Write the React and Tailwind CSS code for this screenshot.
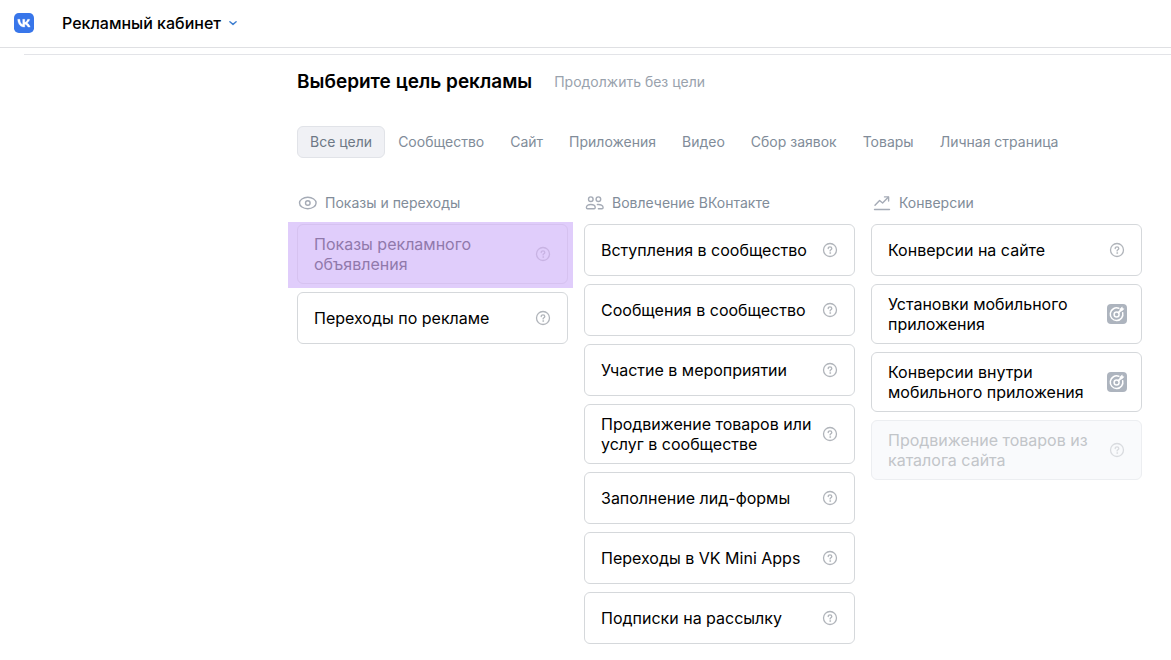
import clsx from 'clsx'

const tabs = ['Все цели', 'Сообщество', 'Сайт', 'Приложения', 'Видео', 'Сбор заявок', 'Товары', 'Личная страница']

const columns = [
  {
    title: 'Показы и переходы',
    icon: EyeIcon,
    goals: [
      { title: 'Показы рекламного объявления', disabled: true, highlighted: true },
      { title: 'Переходы по рекламе' },
    ],
  },
  {
    title: 'Вовлечение ВКонтакте',
    icon: UsersIcon,
    goals: [
      { title: 'Вступления в сообщество' },
      { title: 'Сообщения в сообщество' },
      { title: 'Участие в мероприятии' },
      { title: 'Продвижение товаров или услуг в сообществе' },
      { title: 'Заполнение лид-формы' },
      { title: 'Переходы в VK Mini Apps' },
      { title: 'Подписки на рассылку' },
    ],
  },
  {
    title: 'Конверсии',
    icon: ChartIcon,
    goals: [
      { title: 'Конверсии на сайте' },
      { title: 'Установки мобильного приложения', tracker: true },
      { title: 'Конверсии внутри мобильного приложения', tracker: true },
      { title: 'Продвижение товаров из каталога сайта', disabled: true },
    ],
  },
]

function VkLogo() {
  return (
    <svg viewBox="0 0 20 20" className="w-5 h-5" aria-hidden="true">
      <rect width="20" height="20" rx="4.8" fill="#3876ea" />
      <path
        fill="#fff"
        stroke="#fff"
        strokeWidth=".3"
        d="M10.6 14.100C6.500 14.100 3.900 11.200 3.700 6.300h2.200c.1 3.500 1.600 4.900 2.800 5.200V6.300h2.100v3c1.200-.1 2.400-1.500 2.800-3h2.100c-.3 1.800-1.600 3.200-2.600 3.800 1 .5 2.500 1.700 3.100 4h-2.300c-.5-1.500-1.600-2.600-3.100-2.800v2.800z"
      />
    </svg>
  )
}

function EyeIcon() {
  return (
    <svg viewBox="0 0 20 20" fill="none" stroke="#a5abb6" strokeWidth="1.4" className="w-5 h-5" aria-hidden="true">
      <ellipse cx="10.8" cy="10" rx="8.3" ry="5.7" />
      <circle cx="10.8" cy="10" r="2.300" />
    </svg>
  )
}

function UsersIcon() {
  return (
    <svg viewBox="0 0 20 20" fill="none" stroke="#a5abb6" strokeWidth="1.400" strokeLinecap="round" className="w-5 h-5" aria-hidden="true">
      <g transform="translate(.8 0)">
        <circle cx="6" cy="6.200" r="2.300" />
        <circle cx="13.600" cy="6.200" r="2.300" />
        <path d="M6 11.500c-2.600 0-4.400 1.300-4.400 3 0 .8.400 1.200 1.100 1.200h6.600c.7 0 1.100-.4 1.100-1.200 0-1.700-1.800-3-4.400-3z" />
        <path d="M12.600 11.500c3.200-.4 5.700 1 5.700 3 0 .8-.4 1.200-1.100 1.200h-3.600" />
      </g>
    </svg>
  )
}

function ChartIcon() {
  return (
    <svg viewBox="0 0 20 20" fill="none" stroke="#a5abb6" strokeWidth="1.400" strokeLinecap="round" strokeLinejoin="round" className="w-5 h-5" aria-hidden="true">
      <path d="M3.500 16.500h15" />
      <path d="M4 12.300l4.600-4.800 3 2.500 5.600-5.700" />
      <path d="M13.500 3.900h4.100V8" />
    </svg>
  )
}

function HelpIcon({ className }) {
  return (
    <svg viewBox="0 0 16 16" fill="none" stroke="currentColor" strokeWidth="1.300" strokeLinecap="round" className={clsx('w-4 h-4', className)} aria-hidden="true">
      <circle cx="8" cy="8" r="6.500" />
      <path d="M6.200 6.600c0-1.100.8-1.800 1.800-1.800s1.800.7 1.800 1.600c0 1.300-1.700 1.400-1.700 2.500" />
      <circle cx="8.100" cy="11" r=".5" fill="currentColor" strokeWidth=".6" />
    </svg>
  )
}

function TrackerIcon() {
  return (
    <svg viewBox="0 0 20 20" fill="none" className="w-5 h-5" aria-hidden="true">
      <rect width="20" height="20" rx="4" fill="#adb4be" />
      <g stroke="#fff" strokeWidth="1.500" strokeLinecap="round">
        <path d="M11.800 4.300A6.300 6.300 0 1 0 15.700 8.700" />
        <circle cx="9.600" cy="10.500" r="2.500" />
        <path d="M11.500 8.600L14.500 5.600" strokeWidth="1.800" />
      </g>
      <path fill="#fff" d="M12.700 5.100l2.500-2.500.6 1.600 1.600.6-2.500 2.500-2.200-.1z" />
    </svg>
  )
}

function GoalCard({ goal }) {
  return (
    <div className="relative">
      {goal.highlighted && <div className="absolute -top-0.5 -bottom-1 -left-[9px] -right-[5px] bg-[#e0cdfb]" />}
      <button
        type="button"
        disabled={goal.disabled}
        className={clsx(
          'relative w-full min-h-[52px] flex items-center justify-between gap-2 rounded-md border py-[9px] pl-4 pr-3.5 text-left text-base leading-5',
          goal.highlighted && 'border-[#d6c2f0] text-[#9079ab]',
          goal.disabled && !goal.highlighted && 'border-[#eceef1] bg-[#f9fafc] text-[#c2c5c9]',
          !goal.disabled && 'border-[#d5d8db] bg-white text-black'
        )}
      >
        <span className="max-w-[212px]">{goal.title}</span>
        <span className="w-5 flex justify-center shrink-0">
          {goal.tracker ? (
            <TrackerIcon />
          ) : (
            <HelpIcon
              className={clsx(
                goal.highlighted && 'text-[#c8b3e3]',
                goal.disabled && !goal.highlighted && 'text-[#d9dbdf]',
                !goal.disabled && 'text-[#b0b4ba]'
              )}
            />
          )}
        </span>
      </button>
    </div>
  )
}

export default function App() {
  return (
    <div className="bg-white font-['Inter',sans-serif]">
      {/* Header */}
      <header className="h-12 flex items-center border-b border-[#dfe0e3] pl-3.5 pb-0.5">
        <a href="#" aria-label="VK">
          <VkLogo />
        </a>
        <button type="button" className="ml-7 flex items-center gap-2 text-base font-medium text-black">
          Рекламный кабинет
          <svg viewBox="0 0 8 6" fill="none" stroke="#3f7fd0" strokeWidth="1.400" strokeLinecap="round" strokeLinejoin="round" className="w-2 h-1.5" aria-hidden="true">
            <path d="M.9 1.700L4 4.400l3.100-2.700" />
          </svg>
        </button>
      </header>

      <main className="mt-1.5 ml-6 border-t border-[#e3e4e8] pl-[273px] pr-[29px] pb-4">
        <div className="mt-[13px] flex items-center gap-[22px]">
          <h1 className="text-[19px] leading-7 font-semibold text-black">Выберите цель рекламы</h1>
          <a href="#" className="text-sm text-[#99a2ad]">Продолжить без цели</a>
        </div>

        {/* Filters */}
        <nav className="mt-[30px] flex whitespace-nowrap text-sm">
          {tabs.map((tab, i) => (
            <button
              key={tab}
              type="button"
              className={clsx(
                'h-8 px-3 rounded-md border',
                i === 0 ? 'border-[#e1e3e8] bg-[#f0f1f5] text-[#6d7885]' : 'border-transparent text-[#818c99]'
              )}
            >
              {tab}
            </button>
          ))}
        </nav>

        {/* Goals */}
        <div className="mt-[35px] grid grid-cols-3 items-start gap-4">
          {columns.map(({ title, icon: Icon, goals }) => (
            <section key={title}>
              <h2 className="flex items-center gap-2 text-sm text-[#818c99]">
                <Icon />
                {title}
              </h2>
              <div className="mt-[11px] flex flex-col gap-2">
                {goals.map((goal) => (
                  <GoalCard key={goal.title} goal={goal} />
                ))}
              </div>
            </section>
          ))}
        </div>
      </main>
    </div>
  )
}
